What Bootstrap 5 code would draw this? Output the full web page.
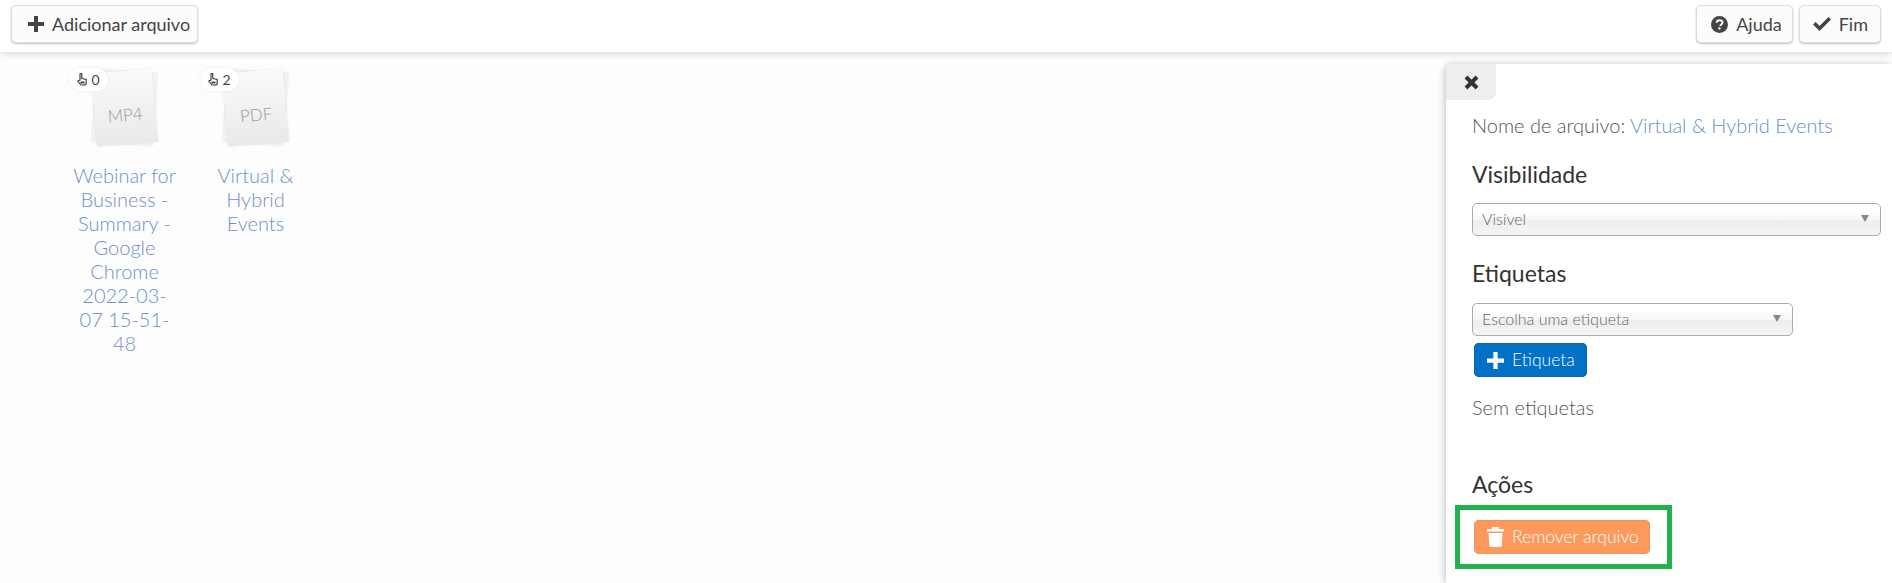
<!DOCTYPE html>
<html lang="pt">
<head>
    <meta charset="UTF-8">
    <title>Arquivos</title>
    <link href="https://cdn.jsdelivr.net/npm/bootstrap@5.3.3/dist/css/bootstrap.min.css" rel="stylesheet">
    <style>
        body {
            font-family: Lato, "Liberation Sans", sans-serif;
            background-color: #fdfdfd;
            height: 583px;
            overflow: hidden;
            color: #444;
        }

        button svg { flex-shrink: 0; }

        /* Top bar */
        .top-bar {
            height: 52px;
            padding: 5px 11px;
            background-color: #fff;
            box-shadow: 0 1px 8px rgba(0, 0, 0, .18);
            position: relative;
        }

        .bar-btn {
            height: 38px;
            padding: 0 10px 0 14px;
            font-size: 18px;
            color: #444;
            background-color: #fcfcfc;
            border: 1px solid #ddd;
            border-radius: 5px;
            box-shadow: 0 1px 2px rgba(0, 0, 0, .25);
        }

        .bar-btn svg { fill: #444; }
        .bar-add { width: 187px; padding-left: 16px; white-space: nowrap; }
        .bar-end { padding: 0 12px 0 13px; }
        .bar-group { gap: 6px; }

        /* Files */
        .file-grid {
            padding: 0 0 0 59px;
            margin-top: 16px;
        }

        .file-item {
            width: 131px;
            padding: 0 13px;
            text-align: center;
        }

        .file-thumb {
            width: 72px;
            height: 82px;
            margin: 0 auto 13px;
            position: relative;
        }

        .sheet {
            position: absolute;
            inset: 3px 6px 6px 5px;
            background: linear-gradient(#fafafa, #e9e9e9);
            box-shadow: 0 0 2px rgba(0, 0, 0, .12);
        }

        .sheet-back { transform: rotate(4deg); background: #f2f2f2; }

        .sheet-front {
            transform: rotate(-5deg);
            display: flex;
            align-items: center;
            justify-content: center;
            padding-top: 14px;
            font-size: 17px;
            font-weight: 300;
            color: #999;
        }

        .click-pill {
            position: absolute;
            left: -20px;
            top: 0;
            height: 23px;
            padding: 0 8px;
            display: flex;
            align-items: center;
            gap: 5px;
            font-size: 14px;
            color: #444;
            background-color: #fff;
            border-radius: 12px;
            box-shadow: 0 0 3px rgba(0, 0, 0, .08);
        }

        .file-name {
            font-size: 20px;
            line-height: 24px;
            font-weight: 300;
            color: #6f8fc9;
            text-decoration: none;
            display: block;
        }

        /* Side panel */
        .side-panel {
            width: 446px;
            height: 519px;
            margin-top: 12px;
            background-color: #fff;
            border-top-left-radius: 8px;
            box-shadow: -2px 0 6px rgba(0, 0, 0, .2);
            flex-shrink: 0;
        }

        .close-tab {
            width: 50px;
            height: 36px;
            background-color: #eee;
            border-top-left-radius: 8px;
            border-bottom-right-radius: 8px;
        }

        .panel-body-wrap { padding: 13px 11px 0 26px; }

        .panel-text {
            font-size: 20px;
            line-height: 24px;
            font-weight: 300;
            color: #555;
        }

        .panel-text a { color: #6f8fc9; text-decoration: none; }

        .panel-title {
            font-size: 23px;
            line-height: 28px;
            font-weight: 400;
            color: #333;
            margin: 0;
        }

        .title-vis { margin-top: 23px; margin-bottom: 15px; }
        .title-tag { margin-top: 23px; margin-bottom: 16px; }
        .title-act { margin-top: 51px; margin-bottom: 7px; }

        .chosen-box {
            height: 33px;
            padding: 0 11px 2px 9px;
            font-size: 16px;
            font-weight: 300;
            color: #666;
            border: 1px solid #aaa;
            border-radius: 5px;
            background: linear-gradient(#fff 20%, #f6f6f6 50%, #eee 52%, #f4f4f4 100%);
        }

        .chosen-short { width: 321px; }

        .chosen-arrow {
            width: 0;
            height: 0;
            border-left: 4px solid transparent;
            border-right: 4px solid transparent;
            border-top: 7px solid #888;
        }

        .act-btn {
            height: 34px;
            padding: 0 13px;
            font-size: 17.5px;
            font-weight: 300;
            color: #fff;
            border-radius: 5px;
            border: 0;
            white-space: nowrap;
        }

        .act-blue {
            width: 113px;
            margin: 7px 0 0 2px;
            background-color: #0071c5;
            box-shadow: 0 0 0 1px #0a66ad inset;
        }

        .act-orange {
            width: 176px;
            background-color: #fd9a5b;
            box-shadow: 0 0 0 1px #f0935a inset;
        }

        .no-tags { margin-top: 18px; }

        .green-mark {
            width: 217px;
            height: 64px;
            margin-left: -17px;
            padding: 10px 0 0 14px;
            border: 5px solid #22b14c;
        }
    </style>
</head>
<body>

    <!-- Top bar -->
    <header class="top-bar d-flex justify-content-between align-items-start">
        <button type="button" class="bar-btn bar-add d-flex align-items-center gap-2">
            <svg width="16" height="16" viewBox="0 0 16 16"><path d="M6 0h4v6h6v4h-6v6H6v-6H0V6h6z"/></svg>
            Adicionar arquivo
        </button>
        <div class="d-flex bar-group">
            <button type="button" class="bar-btn d-flex align-items-center gap-2">
                <svg width="17" height="17" viewBox="0 0 17 17"><circle cx="8.5" cy="8.5" r="8.5"/><path d="M5.6 6.6c.2-1.6 1.4-2.4 3-2.4 1.7 0 2.9 1 2.9 2.4 0 1.2-.7 1.7-1.4 2.2-.5.4-.8.6-.8 1.2" fill="none" stroke="#fff" stroke-width="2"/><rect x="7.3" y="11.3" width="2.2" height="2.2" fill="#fff"/></svg>
                Ajuda
            </button>
            <button type="button" class="bar-btn bar-end d-flex align-items-center gap-2">
                <svg width="18" height="14" viewBox="0 0 18 14"><path d="M0 7.5l2.600-2.600 4 4L15.400 0 18 2.600 6.600 14z"/></svg>
                Fim
            </button>
        </div>
    </header>

    <div class="d-flex justify-content-between">
        <!-- Files -->
        <div class="file-grid d-flex align-items-start">
            <div class="file-item">
                <div class="file-thumb">
                    <div class="sheet sheet-back"></div>
                    <div class="sheet sheet-front">MP4</div>
                    <div class="click-pill">
                        <svg width="10" height="13" viewBox="0 0 10 13"><path d="M3 7V1.200a.9.9 0 0 1 1.800 0V5.500l4.400 1V10a2 2 0 0 1-2 2H4L.8 8z" fill="none" stroke="#444" stroke-width="1.200"/><path d="M3.500 8.500h4v2h-4z" fill="#444"/></svg>
                        0
                    </div>
                </div>
                <a class="file-name" href="#">Webinar for Business - Summary - Google Chrome 2022-03-07 15-51-48</a>
            </div>
            <div class="file-item">
                <div class="file-thumb">
                    <div class="sheet sheet-back"></div>
                    <div class="sheet sheet-front">PDF</div>
                    <div class="click-pill">
                        <svg width="10" height="13" viewBox="0 0 10 13"><path d="M3 7V1.200a.9.9 0 0 1 1.800 0V5.500l4.400 1V10a2 2 0 0 1-2 2H4L.8 8z" fill="none" stroke="#444" stroke-width="1.200"/><path d="M3.500 8.500h4v2h-4z" fill="#444"/></svg>
                        2
                    </div>
                </div>
                <a class="file-name" href="#">Virtual &amp; Hybrid Events</a>
            </div>
        </div>

        <!-- Side panel -->
        <aside class="side-panel">
            <div class="close-tab d-flex align-items-center justify-content-center">
                <svg width="15" height="15" viewBox="0 0 15 15"><path d="M2 2l11 11M13 2L2 13" stroke="#333" stroke-width="4"/></svg>
            </div>
            <div class="panel-body-wrap">
                <div class="panel-text">Nome de arquivo: <a href="#">Virtual &amp; Hybrid Events</a></div>
                <h5 class="panel-title title-vis">Visibilidade</h5>
                <div class="chosen-box d-flex align-items-center justify-content-between">
                    <span>Visível</span><span class="chosen-arrow"></span>
                </div>
                <h5 class="panel-title title-tag">Etiquetas</h5>
                <div class="chosen-box chosen-short d-flex align-items-center justify-content-between">
                    <span>Escolha uma etiqueta</span><span class="chosen-arrow"></span>
                </div>
                <button type="button" class="act-btn act-blue d-flex align-items-center gap-2">
                    <svg width="17" height="17" viewBox="0 0 16 16" fill="#fff"><path d="M6 0h4v6h6v4h-6v6H6v-6H0V6h6z"/></svg>
                    Etiqueta
                </button>
                <div class="panel-text no-tags">Sem etiquetas</div>
                <h5 class="panel-title title-act">Ações</h5>
                <div class="green-mark">
                    <button type="button" class="act-btn act-orange d-flex align-items-center gap-2">
                        <svg width="17" height="20" viewBox="0 0 17 20" fill="#fff"><path d="M6 0h5a1 1 0 0 1 1 1v1h4a1 1 0 0 1 1 1v1.500H0V3a1 1 0 0 1 1-1h4V1a1 1 0 0 1 1-1zM1.500 6h14l-.8 12.500a1.500 1.500 0 0 1-1.500 1.500H3.800a1.500 1.500 0 0 1-1.500-1.500z"/></svg>
                        Remover arquivo
                    </button>
                </div>
            </div>
        </aside>
    </div>

</body>
</html>
